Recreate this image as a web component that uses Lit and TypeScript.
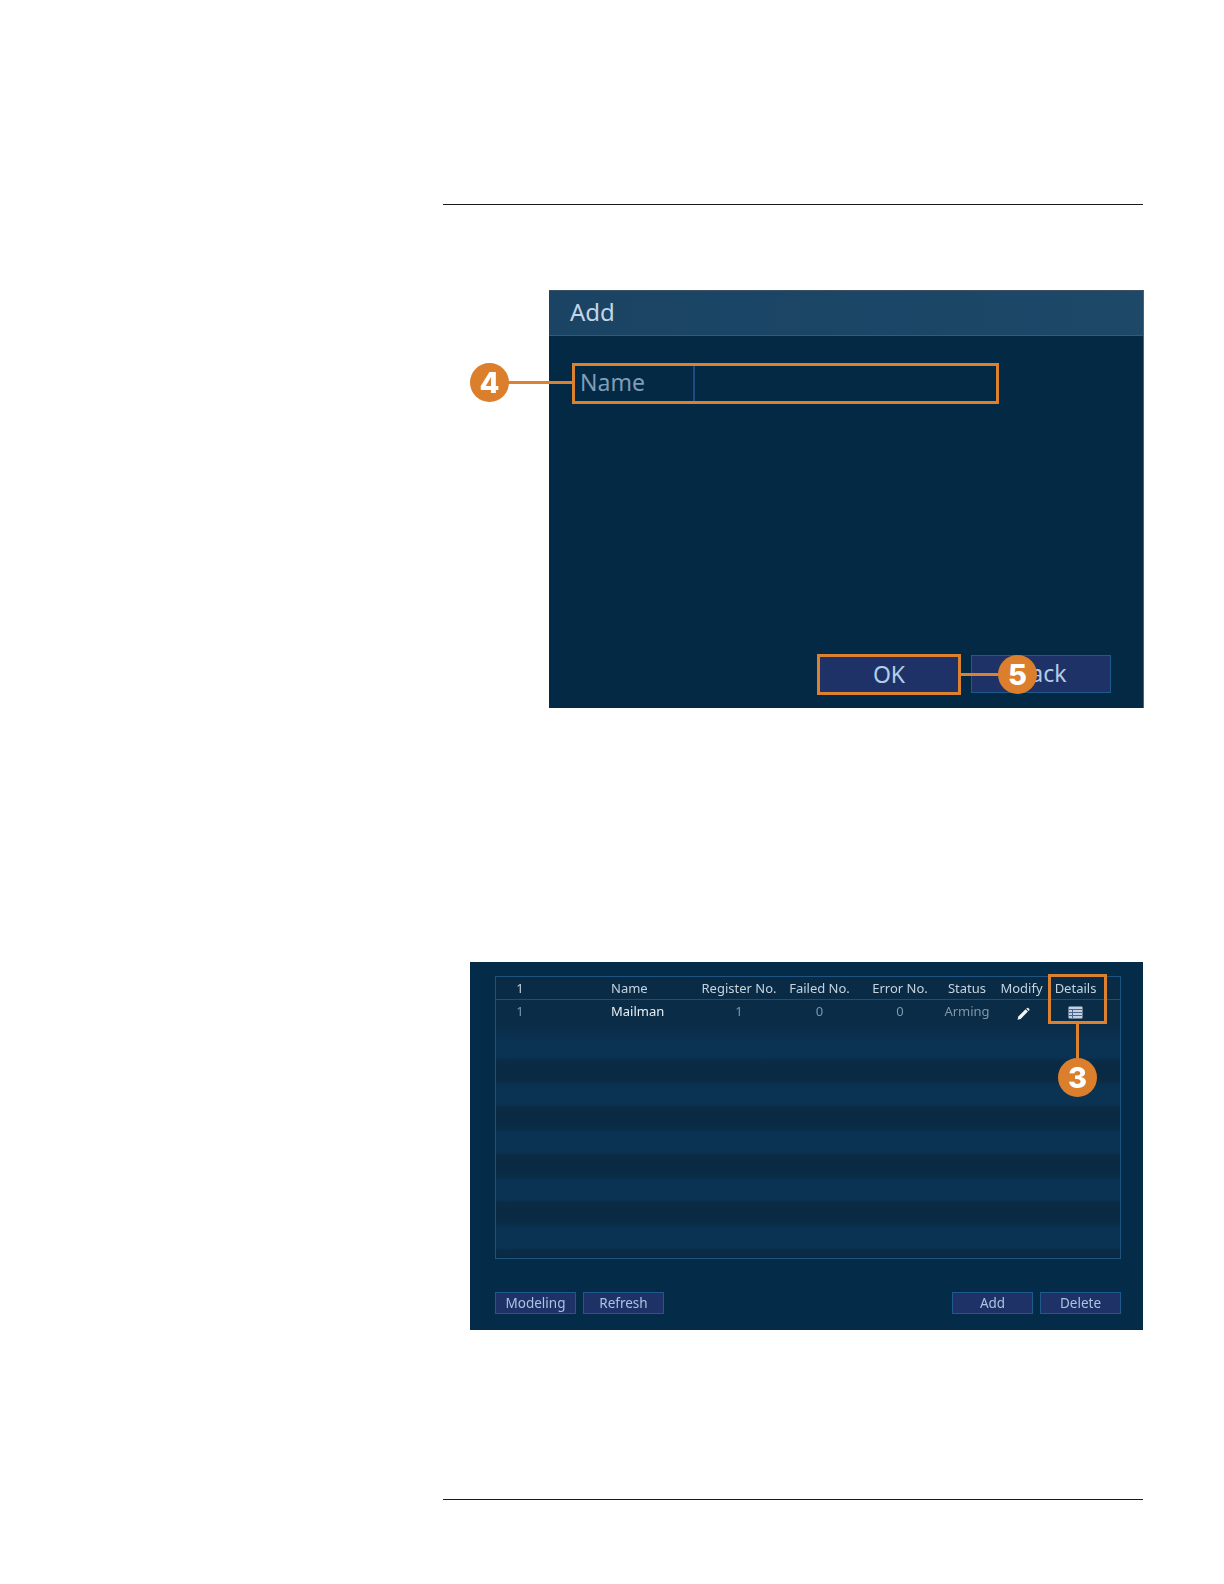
import { LitElement, html, css, svg } from "lit";
import { customElement } from "lit/decorators.js";

const COLS = [
  ["1", "1", "c"],
  ["Name", "Mailman", "n"],
  ["Register No.", "1", "c"],
  ["Failed No.", "0", "c"],
  ["Error No.", "0", "c"],
  ["Status", "Arming", "c"],
];

const pencil = svg`<svg class="ico pen" width="14" height="14" viewBox="0 0 14 14"><path fill="#f2f5f7" d="M1.5 12.7 2.3 9.6 9.6 2.3 11.9 4.6 4.6 11.9Z"/><path fill="#f2f5f7" d="M10.3 1.6 11 .9a.8.8 0 0 1 1.1 0l1.2 1.2a.8.8 0 0 1 0 1.1l-.7.7Z"/></svg>`;
const list = svg`<svg class="ico" width="15" height="13" viewBox="0 0 15 13"><rect x=".5" y=".5" width="14" height="12" rx="1" fill="#c3d0e2"/><path stroke="#4a6690" stroke-width="1" d="M1 3.5H14M1 6.5H14M1 9.5H14M4.5 3.5V12"/></svg>`;

@customElement("app-root")
export class AppRoot extends LitElement {
  static styles = css`
    :host {
      display: block;
      width: 1224px;
      height: 1584px;
      background: #fff;
      font-family: "Noto Sans", sans-serif;
      box-sizing: border-box;
      padding: 204px 81px 0 443px;
    }
    .rule { height: 1px; background: #1a1a1a; }
    .fig { position: relative; box-sizing: border-box; filter: blur(0.3px); }
    .fig1 {
      margin: 85px -1px 0 106px;
      height: 418px;
      background: #042944;
      display: flex;
      flex-direction: column;
      border-top: 1px solid #3a5166;
      border-right: 1px solid #4a6478;
    }
    .head {
      height: 44px;
      background: linear-gradient(90deg, #1a4364, #1d4868);
      border-bottom: 1px solid #2c5c82;
      color: #c3d6e6;
      font-size: 24px;
      line-height: 42px;
      padding-left: 21px;
      flex: none;
    }
    .field {
      margin: 28px 0 0 25px;
      width: 424px;
      height: 39px;
      display: flex;
      box-sizing: border-box;
      flex: none;
    }
    .flabel {
      width: 121px;
      border-right: 2px solid #1f4a80;
      color: #7f9db6;
      font-size: 23px;
      line-height: 36px;
      padding-left: 6px;
      box-sizing: border-box;
    }
    .actions {
      margin-top: auto;
      padding: 0 32px 14px 0;
      display: flex;
      justify-content: flex-end;
      gap: 11px;
    }
    .btn {
      box-sizing: border-box;
      background: #1f3268;
      border: 1px solid #1e5a8c;
      color: #b4cce4;
      text-align: center;
    }
    .big { width: 140px; height: 38px; font-size: 23px; line-height: 34px; }
    .big.ok { width: 142px; height: 40px; margin-bottom: -1px; line-height: 36px; }
    .box { position: absolute; border: 3px solid #dc8130; box-sizing: border-box; }
    .line { position: absolute; background: #dc8130; }
    .badge {
      position: absolute;
      width: 39px;
      height: 39px;
      border-radius: 50%;
      background: #dc7f2c;
      color: #fff;
      font-family: "Inter", sans-serif;
      font-weight: 800;
      font-size: 29px;
      line-height: 39px;
      text-align: center;
    }
    .box-name { left: 23px; top: 72px; width: 427px; height: 41px; }
    .line-name { left: -42px; top: 90px; width: 66px; height: 3px; }
    .badge-4 { left: -79px; top: 72px; }
    .box-ok { left: 268px; top: 363px; width: 144px; height: 41px; }
    .line-ok { left: 411px; top: 382px; width: 40px; height: 3px; }
    .badge-5 { left: 449px; top: 364px; }
    .box-det { left: 578px; top: 12px; width: 59px; height: 50px; }
    .line-det { left: 606px; top: 62px; width: 3px; height: 36px; }
    .badge-3 { left: 588px; top: 96px; }
    .fig2 {
      margin: 254px 0 0 27px;
      height: 368px;
      background: #042b47;
      padding: 14px 22px 0 25px;
    }
    .table {
      height: 283px;
      box-sizing: border-box;
      border: 1px solid #1f5380;
      font-size: 13px;
      color: #c5d3de;
      overflow: hidden;
    }
    .row {
      display: grid;
      grid-template-columns: 48px 155px 80px 81px 80px 54px 55px 53px 1fr;
      line-height: 22px;
      text-align: center;
      box-sizing: border-box;
    }
    .row.hd { border-bottom: 1px solid #1f4f78; height: 23px; background: #0a2b46; }
    .row.dim { color: #7f97a9; height: 35px; background: linear-gradient(#0b2c46 70%, #0a3050); }
    .row.dk { height: 23.75px; background: linear-gradient(#0a2d48, #0a2a43 25%, #0a2a43 75%, #0a2d48); }
    .row.lt { height: 23.75px; background: linear-gradient(#0a3050, #0a3353 25%, #0a3353 75%, #0a3050); }
    .n { text-align: left; padding-left: 67px; }
    .m { color: #e8eef2; }
    .ico { vertical-align: middle; }
    .pen { transform: translate(1px, 1px); }
    .tools {
      margin-top: 33px;
      display: flex;
      gap: 7px;
    }
    .tools .sp { flex: 1; }
    .small { width: 81px; height: 22px; font-size: 13.5px; line-height: 20px; color: #a9c4de; }
    .rule2 { margin-top: 169px; }
  `;

  render() {
    const stripes = [1, 0, 1, 0, 1, 0, 1, 0, 1, 0];
    return html`
      <div class="rule"></div>
      <div class="fig fig1">
        <div class="head">Add</div>
        <div class="field"><div class="flabel">Name</div></div>
        <div class="actions">
          <div class="btn big ok">OK</div>
          <div class="btn big">Back</div>
        </div>
        <div class="box box-name"></div>
        <div class="line line-name"></div>
        <div class="badge badge-4">4</div>
        <div class="box box-ok"></div>
        <div class="line line-ok"></div>
        <div class="badge badge-5">5</div>
      </div>
      <div class="fig fig2">
        <div class="table">
          <div class="row hd">
            ${COLS.map((c) => html`<div class=${c[2]}>${c[0]}</div>`)}
            <div>Modify</div><div>Details</div><div></div>
          </div>
          <div class="row dim">
            ${COLS.map((c) => html`<div class="${c[2]} ${c[1] === "Mailman" ? "m" : ""}">${c[1]}</div>`)}
            <div>${pencil}</div><div>${list}</div><div></div>
          </div>
          ${stripes.map((s) => html`<div class="row ${s ? "lt" : "dk"}"></div>`)}
        </div>
        <div class="tools">
          <div class="btn small">Modeling</div>
          <div class="btn small">Refresh</div>
          <div class="sp"></div>
          <div class="btn small">Add</div>
          <div class="btn small">Delete</div>
        </div>
        <div class="box box-det"></div>
        <div class="line line-det"></div>
        <div class="badge badge-3">3</div>
      </div>
      <div class="rule rule2"></div>
    `;
  }
}
